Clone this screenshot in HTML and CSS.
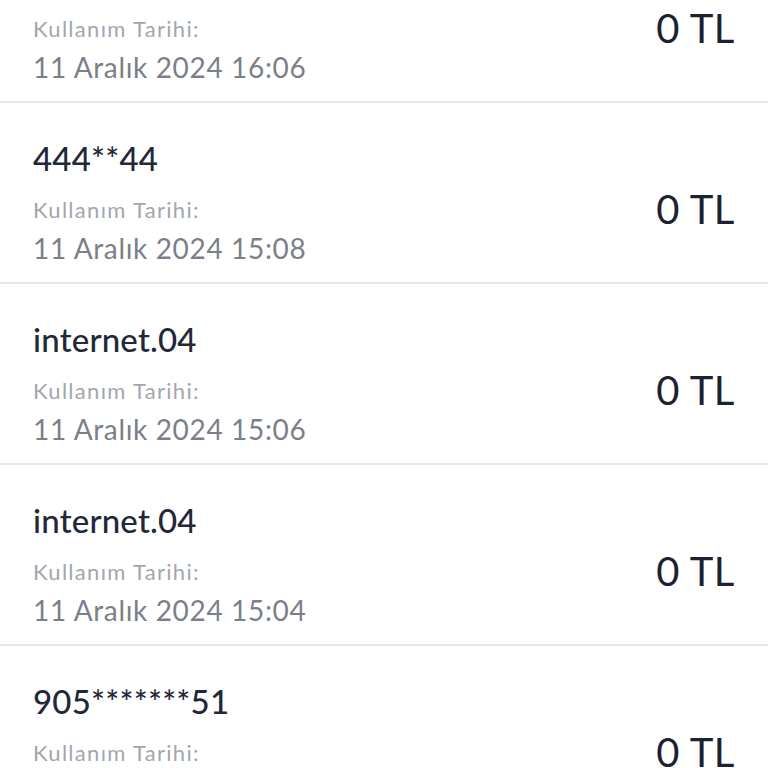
FILE: index.html
```html
<!DOCTYPE html>
<html>
<head>
    <title>Kullanım Geçmişi</title>
    <link rel="stylesheet" href="styles.css">
</head>
<body>

<div class="usage-list">
    <div class="usage-item">
        <div class="usage-info">
            <div class="usage-title">905*******51</div>
            <div class="usage-label">Kullanım Tarihi:</div>
            <div class="usage-date">11 Aralık 2024 16:06</div>
        </div>
        <div class="usage-amount">0 TL</div>
    </div>
    <div class="usage-item">
        <div class="usage-info">
            <div class="usage-title">444**44</div>
            <div class="usage-label">Kullanım Tarihi:</div>
            <div class="usage-date">11 Aralık 2024 15:08</div>
        </div>
        <div class="usage-amount">0 TL</div>
    </div>
    <div class="usage-item">
        <div class="usage-info">
            <div class="usage-title">internet.04</div>
            <div class="usage-label">Kullanım Tarihi:</div>
            <div class="usage-date">11 Aralık 2024 15:06</div>
        </div>
        <div class="usage-amount">0 TL</div>
    </div>
    <div class="usage-item">
        <div class="usage-info">
            <div class="usage-title">internet.04</div>
            <div class="usage-label">Kullanım Tarihi:</div>
            <div class="usage-date">11 Aralık 2024 15:04</div>
        </div>
        <div class="usage-amount">0 TL</div>
    </div>
    <div class="usage-item">
        <div class="usage-info">
            <div class="usage-title">905*******51</div>
            <div class="usage-label">Kullanım Tarihi:</div>
            <div class="usage-date">11 Aralık 2024 15:02</div>
        </div>
        <div class="usage-amount">0 TL</div>
    </div>
</div>

</body>
</html>
```

FILE: styles.css
```css
html, body {
    margin: 0;
    padding: 0;
    background: #ffffff;
    overflow: hidden;
}

body {
    font-family: Lato, "Noto Sans", sans-serif;
    width: 768px;
    height: 768px;
}

.usage-list {
    margin-top: -78px;
}

.usage-item {
    display: flex;
    justify-content: space-between;
    align-items: flex-start;
    height: 181px;
    box-sizing: border-box;
    padding: 35px 33px 0 33px;
    border-bottom: 2px solid #e6e7ec;
}

.usage-title {
    font-size: 33px;
    line-height: 40px;
    font-weight: 500;
    color: #222838;
    letter-spacing: 0.2px;
}

.usage-label {
    margin-top: 18px;
    font-size: 22px;
    line-height: 28px;
    color: #a3a6ae;
    letter-spacing: 1.3px;
}

.usage-date {
    margin-top: 6px;
    font-size: 28px;
    line-height: 36px;
    color: #7b7f89;
    letter-spacing: 0.65px;
}

.usage-amount {
    margin-top: 47px;
    font-size: 40px;
    line-height: 48px;
    color: #1d2131;
    letter-spacing: 0.6px;
}
```
